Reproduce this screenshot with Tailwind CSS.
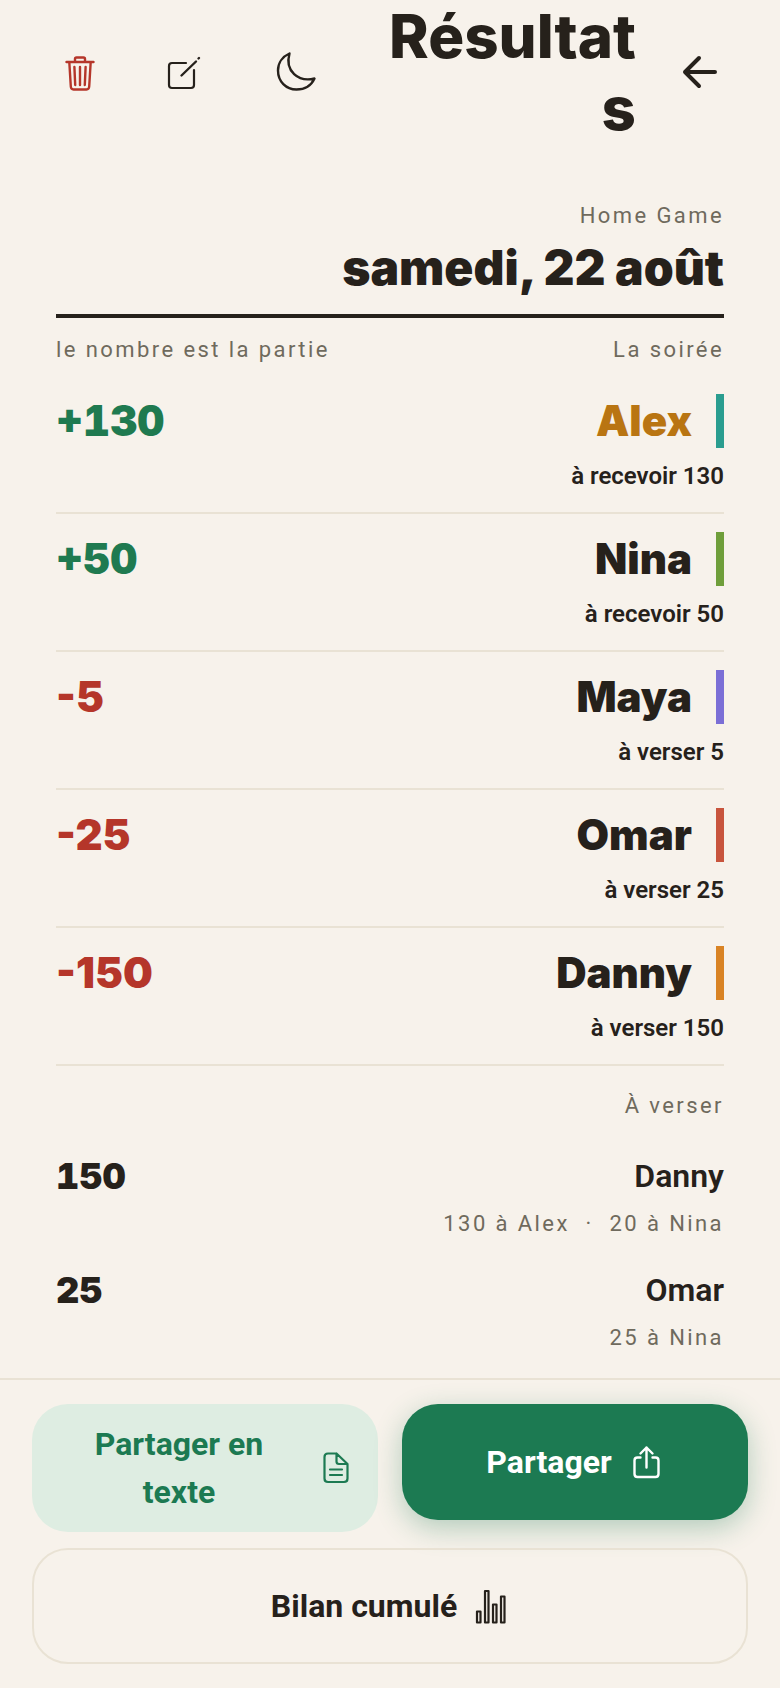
<!DOCTYPE html>
<html lang="fr">
<head>
  <meta charset="UTF-8">
  <meta name="viewport" content="width=device-width, initial-scale=1.0">
  <title>Résultats</title>
  <script src="https://cdn.jsdelivr.net/npm/@tailwindcss/browser@4"></script>
</head>
<body class="min-h-screen flex flex-col bg-[#f7f2eb] text-[#26211b] font-[Roboto,sans-serif]">

  <!-- En-tête -->
  <header class="flex items-center px-9">
    <button type="button" aria-label="Supprimer" class="w-22 h-22 shrink-0 grid place-items-center text-[#b5362a]">
      <svg class="w-10 h-10" viewBox="0 0 40 40" fill="none" stroke="currentColor" stroke-width="2.4" stroke-linecap="round" stroke-linejoin="round">
        <path d="M6.500 10H33.500M9.300 10L10.800 34.500Q11 37.500 13.500 37.500H26.500Q29 37.500 29.200 34.500L30.700 10M15 9.500V7Q15 5.500 16.500 5.500H23.500Q25 5.500 25 7V9.500M20 15V33M14.400 15L15.200 33M25.600 15L24.800 33"/>
      </svg>
    </button>
    <button type="button" aria-label="Modifier" class="w-22 h-22 ml-4 shrink-0 grid place-items-center">
      <svg class="w-10 h-10" viewBox="0 0 40 40" fill="none" stroke="currentColor" stroke-width="2.2" stroke-linecap="round" stroke-linejoin="round">
        <path d="M22 11H8Q5 11 5 14V33Q5 36 8 36H27Q30 36 30 33V18"/>
        <path d="M17.500 23.500L32 9.500M34.500 6.500L35 6" stroke-width="2.400"/>
      </svg>
    </button>
    <button type="button" aria-label="Mode sombre" class="w-22 h-22 ml-6 shrink-0 grid place-items-center">
      <svg class="w-11 h-11" viewBox="0 0 44 44" fill="none" stroke="currentColor" stroke-width="2.400" stroke-linecap="round" stroke-linejoin="round">
        <path d="M15.500 3.500C8.500 6.500 4 13 4 20.500C4 31.500 12 39.500 22.500 39.500C31 39.500 37.500 35 40.500 28.500C24.500 32.500 10.500 21 15.500 3.500Z"/>
      </svg>
    </button>
    <h1 class="flex-1 min-w-0 ml-4 mr-5 text-right wrap-anywhere text-[60px] leading-[72px] font-extrabold font-[Inter,sans-serif]">Résultats</h1>
    <a href="#" aria-label="Retour" class="w-22 h-22 shrink-0 grid place-items-center">
      <svg class="w-10 h-10" viewBox="0 0 40 40" fill="none" stroke="currentColor" stroke-width="4" stroke-linecap="round" stroke-linejoin="round">
        <path d="M35 20H5M19 6L5 20L19 34"/>
      </svg>
    </a>
  </header>

  <main class="px-14 pt-14 pb-6">
    <div class="flex flex-col items-end gap-[6px] pb-4 border-b-4 border-[#26211b]">
      <p class="text-[22px] leading-8 tracking-[0.11em] text-[#6f6a5d]">Home Game</p>
      <h2 class="text-[48px] leading-[60px] font-black font-[Inter,sans-serif]">samedi, 22 août</h2>
    </div>

    <!-- Classement -->
    <div class="flex justify-between pt-4 pb-[10px] text-[22px] leading-8 tracking-[0.11em] text-[#6f6a5d]">
      <span>le nombre est la partie</span>
      <span>La soirée</span>
    </div>
    <ul>
      <li class="flex justify-between py-[18px] border-b-2 border-[#e9e2d4]">
        <span class="text-[42px] leading-[54px] font-black tabular-nums font-[Inter,sans-serif] text-[#1f7a50]">+130</span>
        <div class="flex flex-col items-end gap-[10px]">
          <span class="pr-6 border-r-8 border-[#2a9d8f] text-[42px] leading-[54px] font-black font-[Inter,sans-serif]"><span class="text-[#b97512]">Alex</span></span>
          <span class="text-[24px] leading-9 font-semibold">à recevoir 130</span>
        </div>
      </li>
      <li class="flex justify-between py-[18px] border-b-2 border-[#e9e2d4]">
        <span class="text-[42px] leading-[54px] font-black tabular-nums font-[Inter,sans-serif] text-[#1f7a50]">+50</span>
        <div class="flex flex-col items-end gap-[10px]">
          <span class="pr-6 border-r-8 border-[#6f9e3a] text-[42px] leading-[54px] font-black font-[Inter,sans-serif]">Nina</span>
          <span class="text-[24px] leading-9 font-semibold">à recevoir 50</span>
        </div>
      </li>
      <li class="flex justify-between py-[18px] border-b-2 border-[#e9e2d4]">
        <span class="text-[42px] leading-[54px] font-black font-[Inter,sans-serif] text-[#b5362a]">-5</span>
        <div class="flex flex-col items-end gap-[10px]">
          <span class="pr-6 border-r-8 border-[#7b6fd6] text-[42px] leading-[54px] font-black font-[Inter,sans-serif]">Maya</span>
          <span class="text-[24px] leading-9 font-semibold">à verser 5</span>
        </div>
      </li>
      <li class="flex justify-between py-[18px] border-b-2 border-[#e9e2d4]">
        <span class="text-[42px] leading-[54px] font-black font-[Inter,sans-serif] text-[#b5362a]">-25</span>
        <div class="flex flex-col items-end gap-[10px]">
          <span class="pr-6 border-r-8 border-[#c8553d] text-[42px] leading-[54px] font-black font-[Inter,sans-serif]">Omar</span>
          <span class="text-[24px] leading-9 font-semibold">à verser 25</span>
        </div>
      </li>
      <li class="flex justify-between py-[18px] border-b-2 border-[#e9e2d4]">
        <span class="text-[42px] leading-[54px] font-black font-[Inter,sans-serif] text-[#b5362a]">-150</span>
        <div class="flex flex-col items-end gap-[10px]">
          <span class="pr-6 border-r-8 border-[#d98324] text-[42px] leading-[54px] font-black font-[Inter,sans-serif]">Danny</span>
          <span class="text-[24px] leading-9 font-semibold">à verser 150</span>
        </div>
      </li>
    </ul>

    <!-- Règlements -->
    <h3 class="pt-6 pb-[30px] text-right text-[22px] leading-8 tracking-[0.11em] text-[#6f6a5d]">À verser</h3>
    <ul class="flex flex-col gap-[26px]">
      <li class="flex justify-between">
        <span class="text-[36px] leading-12 font-black tabular-nums font-[Inter,sans-serif]">150</span>
        <div class="flex flex-col items-end gap-2">
          <span class="text-[32px] leading-12 font-semibold">Danny</span>
          <span class="text-[22px] leading-8 tracking-[0.11em] text-[#6f6a5d]">130 à Alex&nbsp; ·&nbsp; 20 à Nina</span>
        </div>
      </li>
      <li class="flex justify-between">
        <span class="text-[36px] leading-12 font-black tabular-nums font-[Inter,sans-serif]">25</span>
        <div class="flex flex-col items-end gap-2">
          <span class="text-[32px] leading-12 font-semibold">Omar</span>
          <span class="text-[22px] leading-8 tracking-[0.11em] text-[#6f6a5d]">25 à Nina</span>
        </div>
      </li>
    </ul>
  </main>

  <!-- Actions -->
  <footer class="mt-auto flex flex-col gap-4 px-8 py-6 border-t-2 border-[#e9e2d4] text-[32px] leading-12 font-bold">
    <div class="flex items-start gap-6">
      <button type="button" class="flex-1 min-h-[116px] flex items-center justify-center gap-4 px-6 py-4 rounded-[36px] bg-[#deede2] text-[#1c7a52]">
        <span class="flex-1">Partager en texte</span>
        <svg class="w-9 h-9 shrink-0" viewBox="0 0 36 36" fill="none" stroke="currentColor" stroke-width="2.2" stroke-linecap="round" stroke-linejoin="round">
          <path d="M17.500 3.500H10Q6.500 3.500 6.500 7V28.500Q6.500 32 10 32H26Q29.500 32 29.500 28.500V14L18.500 3.500V11.500Q18.500 14 21 14H29.500M12 19.500H24M12 25H24"/>
        </svg>
      </button>
      <button type="button" class="flex-1 min-h-[116px] flex items-center justify-center gap-4 px-6 py-4 rounded-[36px] bg-[#1c7a52] text-white shadow-[0_8px_28px_#1c7a5250]">
        <span>Partager</span>
        <svg class="w-9 h-9 shrink-0" viewBox="0 0 36 36" fill="none" stroke="currentColor" stroke-width="2.400" stroke-linecap="round" stroke-linejoin="round">
          <path d="M12.500 13.500H9.500Q6.500 13.500 6.500 16.500V30Q6.500 33 9.500 33H27.500Q30.500 33 30.500 30V16.500Q30.500 13.500 27.500 13.500H24.500M18.500 23.500V3.500M12.500 9.500L18.500 3.500L24.500 9.500"/>
        </svg>
      </button>
    </div>
    <button type="button" class="min-h-[116px] flex items-center justify-center gap-4 px-6 rounded-[36px] border-2 border-[#e9e2d4]">
      <span>Bilan cumulé</span>
      <svg class="w-9 h-9 shrink-0" viewBox="0 0 36 36" fill="none" stroke="currentColor" stroke-width="2.200" stroke-linejoin="round">
        <path d="M4 23.500H7.500V34.500H4ZM12 3H15.500V34.500H12ZM20 16.500H23.500V34.500H20ZM28 8.500H31.500V34.500H28Z"/>
      </svg>
    </button>
  </footer>
</body>
</html>
